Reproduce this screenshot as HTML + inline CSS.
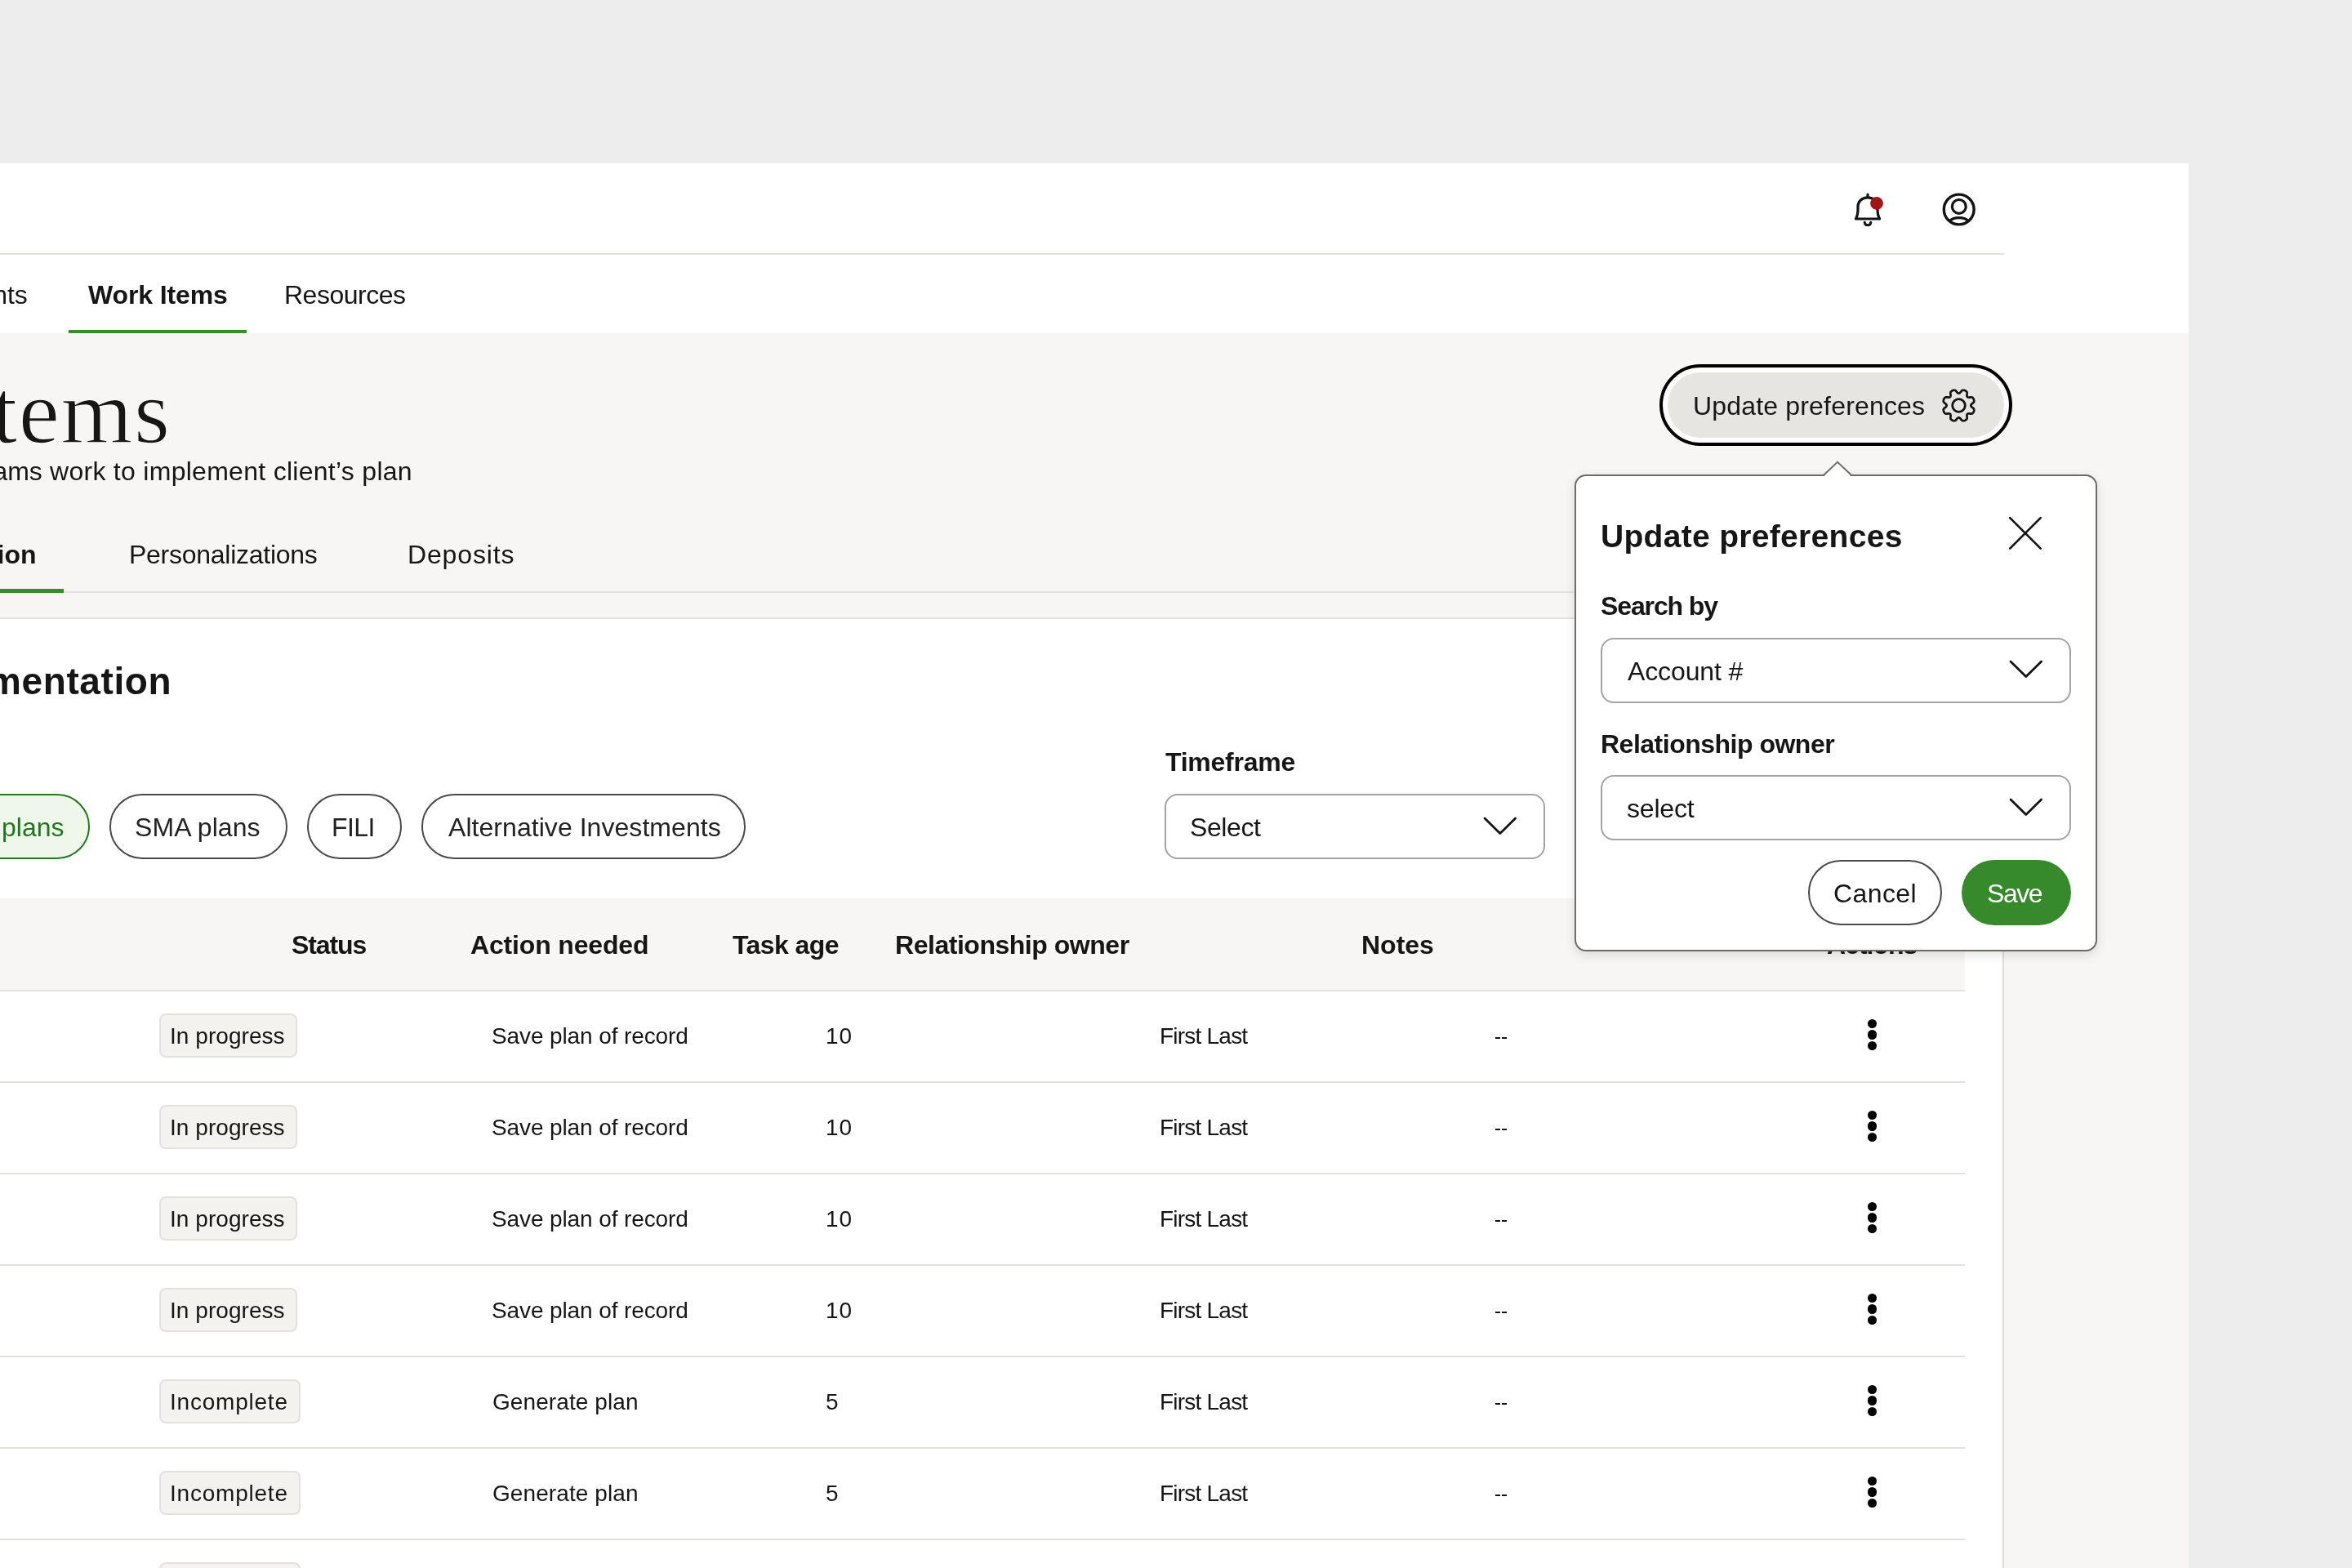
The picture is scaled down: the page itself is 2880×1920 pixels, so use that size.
<!DOCTYPE html><html><head><meta charset="utf-8"><style>
html,body{margin:0;padding:0;}
body{width:2880px;height:1920px;position:relative;overflow:hidden;background:#ededed;font-family:"Liberation Sans",sans-serif;}
.t{position:absolute;white-space:nowrap;line-height:1;will-change:transform;}
</style></head><body>
<div style="position:absolute;left:0px;top:200px;width:2680px;height:208px;background:#ffffff"></div>
<div style="position:absolute;left:0px;top:408px;width:2680px;height:1512px;background:#f7f6f4"></div>
<div style="position:absolute;left:0px;top:757px;width:2452px;height:1163px;background:#ffffff"></div>
<div style="position:absolute;left:2452px;top:757px;width:2px;height:1163px;background:#dddcd8"></div>
<div style="position:absolute;left:0px;top:310px;width:2454px;height:2px;background:#e3e2de"></div>
<div class="t" style="left:-64.00px;top:344.91px;font-size:32px;font-weight:400;color:#161616;font-family:'Liberation Sans', sans-serif;letter-spacing:0.000px;">Clients</div>
<div class="t" style="left:108.00px;top:344.91px;font-size:32px;font-weight:700;color:#161616;font-family:'Liberation Sans', sans-serif;letter-spacing:-0.111px;">Work Items</div>
<div class="t" style="left:348.00px;top:344.91px;font-size:32px;font-weight:400;color:#161616;font-family:'Liberation Sans', sans-serif;letter-spacing:-0.500px;">Resources</div>
<div style="position:absolute;left:84px;top:404px;width:218px;height:4px;background:#3b8a2f"></div>
<svg style="position:absolute;left:2250px;top:220px" width="180" height="70" viewBox="2250 220 180 70">
<path d="M2272.4 268 L2301.6 268" stroke="#141414" stroke-width="3.2" stroke-linecap="round"/>
<path d="M2272.4 268 C2274.2 265 2275 262 2275 256 L2275 253.5 C2275 246.5 2280 241.8 2287 241.8 C2294 241.8 2299 246.5 2299 253.5 L2299 256 C2299 262 2299.8 265 2301.6 268" fill="none" stroke="#141414" stroke-width="3.2" stroke-linejoin="round"/>
<path d="M2287 238 L2287 241.5" stroke="#141414" stroke-width="3.2" stroke-linecap="round"/>
<path d="M2283.2 272.2 C2283.8 277 2290.2 277 2290.8 272.2" fill="none" stroke="#141414" stroke-width="3" stroke-linecap="round"/>
<circle cx="2298" cy="249" r="7.9" fill="#a31515"/>
<circle cx="2398.7" cy="256.5" r="18.4" fill="none" stroke="#141414" stroke-width="3.4"/>
<circle cx="2398.8" cy="252.9" r="8.4" fill="none" stroke="#141414" stroke-width="3.2"/>
<path d="M2386.5 271.5 C2392 265 2405.5 265 2411 271.5" fill="none" stroke="#141414" stroke-width="3.2"/>
</svg>
<div class="t" style="left:-334.00px;top:447.36px;font-size:113px;font-weight:400;color:#161616;font-family:'Liberation Serif', serif;letter-spacing:0.000px;letter-spacing:1.6px;-webkit-text-stroke:1.4px #f7f6f4">Work Items</div>
<div class="t" style="left:-126.00px;top:560.91px;font-size:32px;font-weight:400;color:#161616;font-family:'Liberation Sans', sans-serif;letter-spacing:0.000px;">Helps teams</div>
<div class="t" style="left:61.00px;top:560.91px;font-size:32px;font-weight:400;color:#161616;font-family:'Liberation Sans', sans-serif;letter-spacing:0.283px;">work to implement client’s plan</div>
<div class="t" style="left:-191.60px;top:662.91px;font-size:32px;font-weight:700;color:#161616;font-family:'Liberation Sans', sans-serif;letter-spacing:0.000px;">Implementation</div>
<div class="t" style="left:157.50px;top:662.91px;font-size:32px;font-weight:400;color:#161616;font-family:'Liberation Sans', sans-serif;letter-spacing:-0.267px;">Personalizations</div>
<div class="t" style="left:499.00px;top:662.91px;font-size:32px;font-weight:400;color:#161616;font-family:'Liberation Sans', sans-serif;letter-spacing:0.857px;">Deposits</div>
<div style="position:absolute;left:0px;top:724px;width:1929px;height:2px;background:#e3e2de"></div>
<div style="position:absolute;left:0px;top:721px;width:78px;height:5px;background:#3b8a2f"></div>
<div style="position:absolute;left:0px;top:756px;width:1929px;height:2px;background:#e3e2de"></div>
<div class="t" style="left:-251.40px;top:811.06px;font-size:46px;font-weight:700;color:#161616;font-family:'Liberation Sans', sans-serif;letter-spacing:0.000px;letter-spacing:0.6px">Plan implementation</div>
<div class="t" style="left:1427.00px;top:916.91px;font-size:32px;font-weight:700;color:#161616;font-family:'Liberation Sans', sans-serif;letter-spacing:-0.250px;">Timeframe</div>
<div style="position:absolute;left:-120px;top:972px;width:230px;height:80px;box-sizing:border-box;border:2px solid #207a1e;border-radius:40px;background:#eef7ea"></div>
<div class="t" style="left:-126.50px;top:996.91px;font-size:32px;font-weight:400;color:#1f771d;font-family:'Liberation Sans', sans-serif;letter-spacing:0.000px;">Strategy plans</div>
<div style="position:absolute;left:134px;top:972px;width:218px;height:80px;box-sizing:border-box;border:2px solid #4a4a4a;border-radius:40px;background:#fff"></div>
<div class="t" style="left:165.00px;top:996.91px;font-size:32px;font-weight:400;color:#222;font-family:'Liberation Sans', sans-serif;letter-spacing:0.075px;">SMA plans</div>
<div style="position:absolute;left:376px;top:972px;width:116px;height:80px;box-sizing:border-box;border:2px solid #4a4a4a;border-radius:40px;background:#fff"></div>
<div class="t" style="left:406.40px;top:996.91px;font-size:32px;font-weight:400;color:#222;font-family:'Liberation Sans', sans-serif;letter-spacing:-0.600px;">FILI</div>
<div style="position:absolute;left:516px;top:972px;width:397px;height:80px;box-sizing:border-box;border:2px solid #4a4a4a;border-radius:40px;background:#fff"></div>
<div class="t" style="left:548.50px;top:996.91px;font-size:32px;font-weight:400;color:#222;font-family:'Liberation Sans', sans-serif;letter-spacing:0.050px;">Alternative Investments</div>
<div style="position:absolute;left:1426px;top:972px;width:466px;height:80px;box-sizing:border-box;border:2px solid #a3a3a1;border-radius:16px;background:#fff"></div>
<div class="t" style="left:1457.00px;top:996.91px;font-size:32px;font-weight:400;color:#161616;font-family:'Liberation Sans', sans-serif;letter-spacing:-0.400px;">Select</div>
<svg style="position:absolute;left:1815px;top:999px" width="44" height="26" viewBox="0 0 44 26"><polyline points="3,3 21.8,21.6 40.6,3" fill="none" stroke="#141414" stroke-width="2.8" stroke-linecap="round" stroke-linejoin="round"/></svg>
<div style="position:absolute;left:0px;top:1100px;width:2406px;height:113px;background:#f7f6f4"></div>
<div style="position:absolute;left:0px;top:1212px;width:2406px;height:2px;background:#e3e2de"></div>
<div class="t" style="left:356.50px;top:1140.91px;font-size:32px;font-weight:700;color:#161616;font-family:'Liberation Sans', sans-serif;letter-spacing:-1.100px;">Status</div>
<div class="t" style="left:576.00px;top:1140.91px;font-size:32px;font-weight:700;color:#161616;font-family:'Liberation Sans', sans-serif;letter-spacing:-0.167px;">Action needed</div>
<div class="t" style="left:897.00px;top:1140.91px;font-size:32px;font-weight:700;color:#161616;font-family:'Liberation Sans', sans-serif;letter-spacing:-0.571px;">Task age</div>
<div class="t" style="left:1096.00px;top:1140.91px;font-size:32px;font-weight:700;color:#161616;font-family:'Liberation Sans', sans-serif;letter-spacing:-0.471px;">Relationship owner</div>
<div class="t" style="left:1667.00px;top:1140.91px;font-size:32px;font-weight:700;color:#161616;font-family:'Liberation Sans', sans-serif;letter-spacing:0.000px;">Notes</div>
<div class="t" style="left:2237.00px;top:1140.91px;font-size:32px;font-weight:700;color:#161616;font-family:'Liberation Sans', sans-serif;letter-spacing:-1.000px;">Actions</div>
<div style="position:absolute;left:0px;top:1324px;width:2406px;height:2px;background:#e3e2de"></div>
<div style="position:absolute;left:195px;top:1241px;width:169px;height:54px;box-sizing:border-box;border:2px solid #e2e1dc;border-radius:8px;background:#f3f2ee"></div>
<div class="t" style="left:208.00px;top:1255.10px;font-size:28px;font-weight:400;color:#161616;font-family:'Liberation Sans', sans-serif;letter-spacing:0.050px;">In progress</div>
<div class="t" style="left:602.00px;top:1255.10px;font-size:28px;font-weight:400;color:#161616;font-family:'Liberation Sans', sans-serif;letter-spacing:-0.111px;">Save plan of record</div>
<div class="t" style="left:1011.00px;top:1255.10px;font-size:28px;font-weight:400;color:#161616;font-family:'Liberation Sans', sans-serif;letter-spacing:1.000px;">10</div>
<div class="t" style="left:1420.00px;top:1255.10px;font-size:28px;font-weight:400;color:#161616;font-family:'Liberation Sans', sans-serif;letter-spacing:-0.778px;">First Last</div>
<div style="position:absolute;left:1831px;top:1270px;width:6px;height:2.4px;background:#141414"></div>
<div style="position:absolute;left:1839px;top:1270px;width:6px;height:2.4px;background:#141414"></div>
<div style="position:absolute;left:2286.9px;top:1247.8000000000002px;width:11.2px;height:11.2px;border-radius:50%;background:#000"></div>
<div style="position:absolute;left:2286.9px;top:1261.4px;width:11.2px;height:11.2px;border-radius:50%;background:#000"></div>
<div style="position:absolute;left:2286.9px;top:1275.0px;width:11.2px;height:11.2px;border-radius:50%;background:#000"></div>
<div style="position:absolute;left:0px;top:1436px;width:2406px;height:2px;background:#e3e2de"></div>
<div style="position:absolute;left:195px;top:1353px;width:169px;height:54px;box-sizing:border-box;border:2px solid #e2e1dc;border-radius:8px;background:#f3f2ee"></div>
<div class="t" style="left:208.00px;top:1367.10px;font-size:28px;font-weight:400;color:#161616;font-family:'Liberation Sans', sans-serif;letter-spacing:0.050px;">In progress</div>
<div class="t" style="left:602.00px;top:1367.10px;font-size:28px;font-weight:400;color:#161616;font-family:'Liberation Sans', sans-serif;letter-spacing:-0.111px;">Save plan of record</div>
<div class="t" style="left:1011.00px;top:1367.10px;font-size:28px;font-weight:400;color:#161616;font-family:'Liberation Sans', sans-serif;letter-spacing:1.000px;">10</div>
<div class="t" style="left:1420.00px;top:1367.10px;font-size:28px;font-weight:400;color:#161616;font-family:'Liberation Sans', sans-serif;letter-spacing:-0.778px;">First Last</div>
<div style="position:absolute;left:1831px;top:1382px;width:6px;height:2.4px;background:#141414"></div>
<div style="position:absolute;left:1839px;top:1382px;width:6px;height:2.4px;background:#141414"></div>
<div style="position:absolute;left:2286.9px;top:1359.8000000000002px;width:11.2px;height:11.2px;border-radius:50%;background:#000"></div>
<div style="position:absolute;left:2286.9px;top:1373.4px;width:11.2px;height:11.2px;border-radius:50%;background:#000"></div>
<div style="position:absolute;left:2286.9px;top:1387.0px;width:11.2px;height:11.2px;border-radius:50%;background:#000"></div>
<div style="position:absolute;left:0px;top:1548px;width:2406px;height:2px;background:#e3e2de"></div>
<div style="position:absolute;left:195px;top:1465px;width:169px;height:54px;box-sizing:border-box;border:2px solid #e2e1dc;border-radius:8px;background:#f3f2ee"></div>
<div class="t" style="left:208.00px;top:1479.10px;font-size:28px;font-weight:400;color:#161616;font-family:'Liberation Sans', sans-serif;letter-spacing:0.050px;">In progress</div>
<div class="t" style="left:602.00px;top:1479.10px;font-size:28px;font-weight:400;color:#161616;font-family:'Liberation Sans', sans-serif;letter-spacing:-0.111px;">Save plan of record</div>
<div class="t" style="left:1011.00px;top:1479.10px;font-size:28px;font-weight:400;color:#161616;font-family:'Liberation Sans', sans-serif;letter-spacing:1.000px;">10</div>
<div class="t" style="left:1420.00px;top:1479.10px;font-size:28px;font-weight:400;color:#161616;font-family:'Liberation Sans', sans-serif;letter-spacing:-0.778px;">First Last</div>
<div style="position:absolute;left:1831px;top:1494px;width:6px;height:2.4px;background:#141414"></div>
<div style="position:absolute;left:1839px;top:1494px;width:6px;height:2.4px;background:#141414"></div>
<div style="position:absolute;left:2286.9px;top:1471.8000000000002px;width:11.2px;height:11.2px;border-radius:50%;background:#000"></div>
<div style="position:absolute;left:2286.9px;top:1485.4px;width:11.2px;height:11.2px;border-radius:50%;background:#000"></div>
<div style="position:absolute;left:2286.9px;top:1499.0px;width:11.2px;height:11.2px;border-radius:50%;background:#000"></div>
<div style="position:absolute;left:0px;top:1660px;width:2406px;height:2px;background:#e3e2de"></div>
<div style="position:absolute;left:195px;top:1577px;width:169px;height:54px;box-sizing:border-box;border:2px solid #e2e1dc;border-radius:8px;background:#f3f2ee"></div>
<div class="t" style="left:208.00px;top:1591.10px;font-size:28px;font-weight:400;color:#161616;font-family:'Liberation Sans', sans-serif;letter-spacing:0.050px;">In progress</div>
<div class="t" style="left:602.00px;top:1591.10px;font-size:28px;font-weight:400;color:#161616;font-family:'Liberation Sans', sans-serif;letter-spacing:-0.111px;">Save plan of record</div>
<div class="t" style="left:1011.00px;top:1591.10px;font-size:28px;font-weight:400;color:#161616;font-family:'Liberation Sans', sans-serif;letter-spacing:1.000px;">10</div>
<div class="t" style="left:1420.00px;top:1591.10px;font-size:28px;font-weight:400;color:#161616;font-family:'Liberation Sans', sans-serif;letter-spacing:-0.778px;">First Last</div>
<div style="position:absolute;left:1831px;top:1606px;width:6px;height:2.4px;background:#141414"></div>
<div style="position:absolute;left:1839px;top:1606px;width:6px;height:2.4px;background:#141414"></div>
<div style="position:absolute;left:2286.9px;top:1583.8000000000002px;width:11.2px;height:11.2px;border-radius:50%;background:#000"></div>
<div style="position:absolute;left:2286.9px;top:1597.4px;width:11.2px;height:11.2px;border-radius:50%;background:#000"></div>
<div style="position:absolute;left:2286.9px;top:1611.0px;width:11.2px;height:11.2px;border-radius:50%;background:#000"></div>
<div style="position:absolute;left:0px;top:1772px;width:2406px;height:2px;background:#e3e2de"></div>
<div style="position:absolute;left:195px;top:1689px;width:173px;height:54px;box-sizing:border-box;border:2px solid #e2e1dc;border-radius:8px;background:#f3f2ee"></div>
<div class="t" style="left:208.00px;top:1703.10px;font-size:28px;font-weight:400;color:#161616;font-family:'Liberation Sans', sans-serif;letter-spacing:0.778px;">Incomplete</div>
<div class="t" style="left:603.00px;top:1703.10px;font-size:28px;font-weight:400;color:#161616;font-family:'Liberation Sans', sans-serif;letter-spacing:0.083px;">Generate plan</div>
<div class="t" style="left:1011.00px;top:1703.10px;font-size:28px;font-weight:400;color:#161616;font-family:'Liberation Sans', sans-serif;letter-spacing:2.000px;">5</div>
<div class="t" style="left:1420.00px;top:1703.10px;font-size:28px;font-weight:400;color:#161616;font-family:'Liberation Sans', sans-serif;letter-spacing:-0.778px;">First Last</div>
<div style="position:absolute;left:1831px;top:1718px;width:6px;height:2.4px;background:#141414"></div>
<div style="position:absolute;left:1839px;top:1718px;width:6px;height:2.4px;background:#141414"></div>
<div style="position:absolute;left:2286.9px;top:1695.8000000000002px;width:11.2px;height:11.2px;border-radius:50%;background:#000"></div>
<div style="position:absolute;left:2286.9px;top:1709.4px;width:11.2px;height:11.2px;border-radius:50%;background:#000"></div>
<div style="position:absolute;left:2286.9px;top:1723.0px;width:11.2px;height:11.2px;border-radius:50%;background:#000"></div>
<div style="position:absolute;left:0px;top:1884px;width:2406px;height:2px;background:#e3e2de"></div>
<div style="position:absolute;left:195px;top:1801px;width:173px;height:54px;box-sizing:border-box;border:2px solid #e2e1dc;border-radius:8px;background:#f3f2ee"></div>
<div class="t" style="left:208.00px;top:1815.10px;font-size:28px;font-weight:400;color:#161616;font-family:'Liberation Sans', sans-serif;letter-spacing:0.778px;">Incomplete</div>
<div class="t" style="left:603.00px;top:1815.10px;font-size:28px;font-weight:400;color:#161616;font-family:'Liberation Sans', sans-serif;letter-spacing:0.083px;">Generate plan</div>
<div class="t" style="left:1011.00px;top:1815.10px;font-size:28px;font-weight:400;color:#161616;font-family:'Liberation Sans', sans-serif;letter-spacing:2.000px;">5</div>
<div class="t" style="left:1420.00px;top:1815.10px;font-size:28px;font-weight:400;color:#161616;font-family:'Liberation Sans', sans-serif;letter-spacing:-0.778px;">First Last</div>
<div style="position:absolute;left:1831px;top:1830px;width:6px;height:2.4px;background:#141414"></div>
<div style="position:absolute;left:1839px;top:1830px;width:6px;height:2.4px;background:#141414"></div>
<div style="position:absolute;left:2286.9px;top:1807.8000000000002px;width:11.2px;height:11.2px;border-radius:50%;background:#000"></div>
<div style="position:absolute;left:2286.9px;top:1821.4px;width:11.2px;height:11.2px;border-radius:50%;background:#000"></div>
<div style="position:absolute;left:2286.9px;top:1835.0px;width:11.2px;height:11.2px;border-radius:50%;background:#000"></div>
<div style="position:absolute;left:0px;top:1996px;width:2406px;height:2px;background:#e3e2de"></div>
<div style="position:absolute;left:195px;top:1913px;width:173px;height:54px;box-sizing:border-box;border:2px solid #e2e1dc;border-radius:8px;background:#f3f2ee"></div>
<div class="t" style="left:208.00px;top:1927.10px;font-size:28px;font-weight:400;color:#161616;font-family:'Liberation Sans', sans-serif;letter-spacing:0.778px;">Incomplete</div>
<div class="t" style="left:603.00px;top:1927.10px;font-size:28px;font-weight:400;color:#161616;font-family:'Liberation Sans', sans-serif;letter-spacing:0.083px;">Generate plan</div>
<div class="t" style="left:1011.00px;top:1927.10px;font-size:28px;font-weight:400;color:#161616;font-family:'Liberation Sans', sans-serif;letter-spacing:2.000px;">5</div>
<div class="t" style="left:1420.00px;top:1927.10px;font-size:28px;font-weight:400;color:#161616;font-family:'Liberation Sans', sans-serif;letter-spacing:-0.778px;">First Last</div>
<div style="position:absolute;left:1831px;top:1942px;width:6px;height:2.4px;background:#141414"></div>
<div style="position:absolute;left:1839px;top:1942px;width:6px;height:2.4px;background:#141414"></div>
<div style="position:absolute;left:2286.9px;top:1919.8000000000002px;width:11.2px;height:11.2px;border-radius:50%;background:#000"></div>
<div style="position:absolute;left:2286.9px;top:1933.4px;width:11.2px;height:11.2px;border-radius:50%;background:#000"></div>
<div style="position:absolute;left:2286.9px;top:1947.0px;width:11.2px;height:11.2px;border-radius:50%;background:#000"></div>
<div style="position:absolute;left:2032px;top:446px;width:432px;height:100px;box-sizing:border-box;border:4px solid #000;border-radius:50px;background:#fff"></div>
<div style="position:absolute;left:2042px;top:456px;width:412px;height:80px;border-radius:40px;background:#e6e5e1"></div>
<div class="t" style="left:2073.00px;top:480.91px;font-size:32px;font-weight:400;color:#161616;font-family:'Liberation Sans', sans-serif;letter-spacing:0.176px;">Update preferences</div>
<svg style="position:absolute;left:2370px;top:468px" width="58" height="58" viewBox="2370 468 58 58">
<path d="M2401.22 479.58 L2401.62 478.99 L2402.07 478.51 L2402.57 478.15 L2403.10 477.90 L2403.69 477.76 L2404.32 477.73 L2404.99 477.82 L2405.71 478.02 L2406.47 478.34 L2407.12 478.70 L2407.66 479.12 L2408.08 479.58 L2408.40 480.09 L2408.60 480.65 L2408.69 481.26 L2408.67 481.91 L2408.54 482.62 L2408.45 483.26 L2408.41 483.85 L2408.41 484.37 L2408.46 484.84 L2408.56 485.25 L2408.69 485.60 L2408.88 485.89 L2409.11 486.12 L2409.40 486.31 L2409.75 486.44 L2410.16 486.54 L2410.63 486.59 L2411.15 486.59 L2411.74 486.55 L2412.38 486.46 L2413.09 486.33 L2413.74 486.31 L2414.35 486.40 L2414.91 486.60 L2415.42 486.92 L2415.88 487.34 L2416.30 487.88 L2416.66 488.53 L2416.98 489.29 L2417.18 490.01 L2417.27 490.68 L2417.24 491.31 L2417.10 491.90 L2416.85 492.43 L2416.49 492.93 L2416.01 493.38 L2415.42 493.78 L2414.90 494.18 L2414.45 494.56 L2414.08 494.93 L2413.79 495.30 L2413.56 495.66 L2413.42 496.00 L2413.34 496.34 L2413.34 496.66 L2413.42 497.00 L2413.56 497.34 L2413.79 497.70 L2414.08 498.07 L2414.45 498.44 L2414.90 498.82 L2415.42 499.22 L2416.01 499.62 L2416.49 500.07 L2416.85 500.57 L2417.10 501.10 L2417.24 501.69 L2417.27 502.32 L2417.18 502.99 L2416.98 503.71 L2416.66 504.47 L2416.30 505.12 L2415.88 505.66 L2415.42 506.08 L2414.91 506.40 L2414.35 506.60 L2413.74 506.69 L2413.09 506.67 L2412.38 506.54 L2411.74 506.45 L2411.15 506.41 L2410.63 506.41 L2410.16 506.46 L2409.75 506.56 L2409.40 506.69 L2409.11 506.88 L2408.88 507.11 L2408.69 507.40 L2408.56 507.75 L2408.46 508.16 L2408.41 508.63 L2408.41 509.15 L2408.45 509.74 L2408.54 510.38 L2408.67 511.09 L2408.69 511.74 L2408.60 512.35 L2408.40 512.91 L2408.08 513.42 L2407.66 513.88 L2407.12 514.30 L2406.47 514.66 L2405.71 514.98 L2404.99 515.18 L2404.32 515.27 L2403.69 515.24 L2403.10 515.10 L2402.57 514.85 L2402.07 514.49 L2401.62 514.01 L2401.22 513.42 L2400.82 512.90 L2400.44 512.45 L2400.07 512.08 L2399.70 511.79 L2399.34 511.56 L2399.00 511.42 L2398.66 511.34 L2398.34 511.34 L2398.00 511.42 L2397.66 511.56 L2397.30 511.79 L2396.93 512.08 L2396.56 512.45 L2396.18 512.90 L2395.78 513.42 L2395.38 514.01 L2394.93 514.49 L2394.43 514.85 L2393.90 515.10 L2393.31 515.24 L2392.68 515.27 L2392.01 515.18 L2391.29 514.98 L2390.53 514.66 L2389.88 514.30 L2389.34 513.88 L2388.92 513.42 L2388.60 512.91 L2388.40 512.35 L2388.31 511.74 L2388.33 511.09 L2388.46 510.38 L2388.55 509.74 L2388.59 509.15 L2388.59 508.63 L2388.54 508.16 L2388.44 507.75 L2388.31 507.40 L2388.12 507.11 L2387.89 506.88 L2387.60 506.69 L2387.25 506.56 L2386.84 506.46 L2386.37 506.41 L2385.85 506.41 L2385.26 506.45 L2384.62 506.54 L2383.91 506.67 L2383.26 506.69 L2382.65 506.60 L2382.09 506.40 L2381.58 506.08 L2381.12 505.66 L2380.70 505.12 L2380.34 504.47 L2380.02 503.71 L2379.82 502.99 L2379.73 502.32 L2379.76 501.69 L2379.90 501.10 L2380.15 500.57 L2380.51 500.07 L2380.99 499.62 L2381.58 499.22 L2382.10 498.82 L2382.55 498.44 L2382.92 498.07 L2383.21 497.70 L2383.44 497.34 L2383.58 497.00 L2383.66 496.66 L2383.66 496.34 L2383.58 496.00 L2383.44 495.66 L2383.21 495.30 L2382.92 494.93 L2382.55 494.56 L2382.10 494.18 L2381.58 493.78 L2380.99 493.38 L2380.51 492.93 L2380.15 492.43 L2379.90 491.90 L2379.76 491.31 L2379.73 490.68 L2379.82 490.01 L2380.02 489.29 L2380.34 488.53 L2380.70 487.88 L2381.12 487.34 L2381.58 486.92 L2382.09 486.60 L2382.65 486.40 L2383.26 486.31 L2383.91 486.33 L2384.62 486.46 L2385.26 486.55 L2385.85 486.59 L2386.37 486.59 L2386.84 486.54 L2387.25 486.44 L2387.60 486.31 L2387.89 486.12 L2388.12 485.89 L2388.31 485.60 L2388.44 485.25 L2388.54 484.84 L2388.59 484.37 L2388.59 483.85 L2388.55 483.26 L2388.46 482.62 L2388.33 481.91 L2388.31 481.26 L2388.40 480.65 L2388.60 480.09 L2388.92 479.58 L2389.34 479.12 L2389.88 478.70 L2390.53 478.34 L2391.29 478.02 L2392.01 477.82 L2392.68 477.73 L2393.31 477.76 L2393.90 477.90 L2394.43 478.15 L2394.93 478.51 L2395.38 478.99 L2395.78 479.58 L2396.18 480.10 L2396.56 480.55 L2396.93 480.92 L2397.30 481.21 L2397.66 481.44 L2398.00 481.58 L2398.34 481.66 L2398.66 481.66 L2399.00 481.58 L2399.34 481.44 L2399.70 481.21 L2400.07 480.92 L2400.44 480.55 L2400.82 480.10 Z" fill="none" stroke="#141414" stroke-width="2.7" stroke-linejoin="round"/>
<circle cx="2398.5" cy="496.5" r="7.8" fill="none" stroke="#141414" stroke-width="2.8"/>
</svg>
<div style="position:absolute;left:1928px;top:581px;width:640px;height:584px;box-sizing:border-box;border:2px solid #6c6b68;border-radius:14px;background:#fff;box-shadow:0 4px 14px rgba(0,0,0,0.12)"></div>
<svg style="position:absolute;left:2226px;top:560px" width="48" height="26" viewBox="2226 560 48 26"><polygon points="2233.8,582.5 2250,566.3 2266.2,582.5" fill="#fff"/><rect x="2234.6" y="580.4" width="30.8" height="3.4" fill="#fff"/><polyline points="2232.8,582 2250,565.8 2267.2,582" fill="none" stroke="#6c6b68" stroke-width="1.9" stroke-linejoin="miter"/></svg>
<div class="t" style="left:1959.50px;top:636.99px;font-size:39px;font-weight:700;color:#161616;font-family:'Liberation Sans', sans-serif;letter-spacing:0.306px;">Update preferences</div>
<svg style="position:absolute;left:2456px;top:629px" width="48" height="48" viewBox="0 0 48 48"><path d="M5.2 5.1 L42.7 42.6 M42.7 5.1 L5.2 42.6" stroke="#141414" stroke-width="2.7" stroke-linecap="round"/></svg>
<div class="t" style="left:1960.00px;top:725.91px;font-size:32px;font-weight:700;color:#161616;font-family:'Liberation Sans', sans-serif;letter-spacing:-1.125px;">Search by</div>
<div style="position:absolute;left:1960px;top:781px;width:576px;height:80px;box-sizing:border-box;border:2px solid #a3a3a1;border-radius:16px;background:#fff"></div>
<div class="t" style="left:1993.00px;top:805.91px;font-size:32px;font-weight:400;color:#161616;font-family:'Liberation Sans', sans-serif;letter-spacing:-0.125px;">Account #</div>
<svg style="position:absolute;left:2459px;top:807px" width="44" height="26" viewBox="0 0 44 26"><polyline points="3,3 21.8,21.6 40.6,3" fill="none" stroke="#141414" stroke-width="2.8" stroke-linecap="round" stroke-linejoin="round"/></svg>
<div class="t" style="left:1959.50px;top:894.91px;font-size:32px;font-weight:700;color:#161616;font-family:'Liberation Sans', sans-serif;letter-spacing:-0.500px;">Relationship owner</div>
<div style="position:absolute;left:1960px;top:949px;width:576px;height:80px;box-sizing:border-box;border:2px solid #a3a3a1;border-radius:16px;background:#fff"></div>
<div class="t" style="left:1992.00px;top:973.91px;font-size:32px;font-weight:400;color:#161616;font-family:'Liberation Sans', sans-serif;letter-spacing:-0.200px;">select</div>
<svg style="position:absolute;left:2459px;top:976px" width="44" height="26" viewBox="0 0 44 26"><polyline points="3,3 21.8,21.6 40.6,3" fill="none" stroke="#141414" stroke-width="2.8" stroke-linecap="round" stroke-linejoin="round"/></svg>
<div style="position:absolute;left:2214px;top:1053px;width:164px;height:80px;box-sizing:border-box;border:2px solid #4a4a4a;border-radius:40px;background:#fff"></div>
<div class="t" style="left:2245.00px;top:1078.41px;font-size:32px;font-weight:400;color:#161616;font-family:'Liberation Sans', sans-serif;letter-spacing:0.400px;">Cancel</div>
<div style="position:absolute;left:2402px;top:1053px;width:134px;height:80px;border-radius:40px;background:#368a2b"></div>
<div class="t" style="left:2433.00px;top:1078.41px;font-size:32px;font-weight:400;color:#fff;font-family:'Liberation Sans', sans-serif;letter-spacing:-1.467px;">Save</div>
</body></html>
